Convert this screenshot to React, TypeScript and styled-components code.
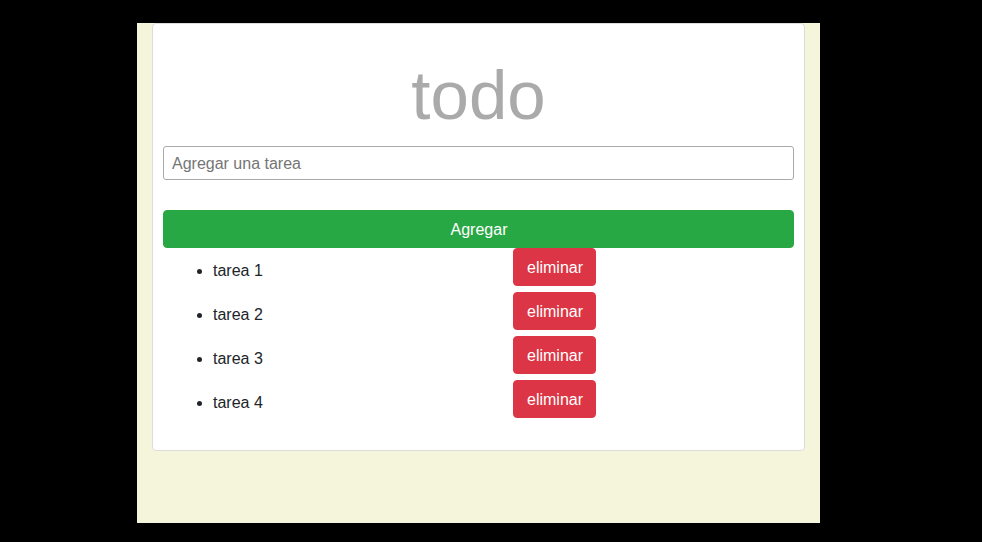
import React, { useState } from "react";
import styled, { createGlobalStyle } from "styled-components";

const Global = createGlobalStyle`
  html, body { margin: 0; padding: 0; background: #000; }
  body { font-family: "Liberation Sans", Arial, sans-serif; }
  #root { padding: 23px 0 0 137px; }
  * { box-sizing: border-box; }
`;

const Page = styled.div`
  width: 683px;
  height: 500px;
  background: #f5f5dc;
  padding: 0 15px;
`;

const Card = styled.div`
  background: #fff;
  border: 1px solid #dcdcdc;
  border-radius: 4px;
  padding: 10px;
  display: flex;
  flex-direction: column;
`;

const Title = styled.h1`
  margin: 23px 0 11px;
  font-size: 69px;
  line-height: 78px;
  font-weight: 400;
  color: #aaa;
  text-align: center;
`;

const Input = styled.input`
  height: 34px;
  width: 100%;
  border: 1px solid #aaa;
  border-radius: 3px;
  padding: 2px 8px 0;
  font-family: "Liberation Sans", Arial, sans-serif;
  font-size: 16px;
  color: #212529;
  outline: none;
  &::placeholder { color: #757575; }
`;

const Button = styled.button<{ $variant: "success" | "danger"; $block?: boolean }>`
  font-family: "Liberation Sans", Arial, sans-serif;
  font-size: 16px;
  line-height: 24px;
  padding: 7px 12px 5px 13px;
  border: 1px solid ${(p) => (p.$variant === "success" ? "#28a745" : "#dc3545")};
  background: ${(p) => (p.$variant === "success" ? "#28a745" : "#dc3545")};
  color: #fff;
  border-radius: 4px;
  cursor: pointer;
  width: ${(p) => (p.$block ? "100%" : "auto")};
  margin-top: ${(p) => (p.$block ? "30px" : "0")};
  flex: none;
`;

const List = styled.ul`
  margin: 0 0 16px;
  padding-left: 50px;
  list-style: disc;
`;

const Item = styled.li`
  margin-bottom: 6px;
  color: #212529;
  font-size: 16px;
  &::marker { color: #212529; }
`;

const Row = styled.div`
  display: flex;
  align-items: flex-start;
`;

const ItemText = styled.span`
  width: 300px;
  padding-top: 14px;
  line-height: 18px;
`;

export default function App() {
  const [tasks, setTasks] = useState(["tarea 1", "tarea 2", "tarea 3", "tarea 4"]);
  const [value, setValue] = useState("");
  return (
    <>
      <Global />
      <Page>
        <Card>
          <Title>todo</Title>
          <Input
            placeholder="Agregar una tarea"
            value={value}
            onChange={(e) => setValue(e.target.value)}
          />
          <Button
            $variant="success"
            $block
            onClick={() => {
              if (value.trim()) {
                setTasks([...tasks, value.trim()]);
                setValue("");
              }
            }}
          >
            Agregar
          </Button>
          <List>
            {tasks.map((t, i) => (
              <Item key={i}>
                <Row>
                  <ItemText>{t}</ItemText>
                  <Button
                    $variant="danger"
                    onClick={() => setTasks(tasks.filter((_, j) => j !== i))}
                  >
                    eliminar
                  </Button>
                </Row>
              </Item>
            ))}
          </List>
        </Card>
      </Page>
    </>
  );
}
